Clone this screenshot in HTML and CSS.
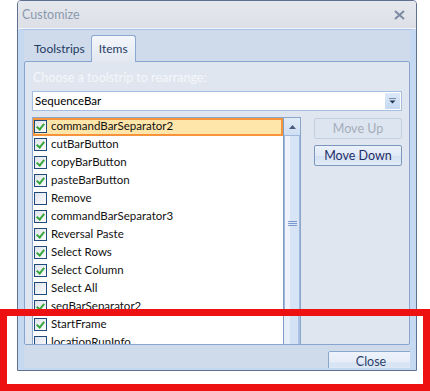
FILE: index.html
```html
<!DOCTYPE html>
<html>
<head>
<meta charset="utf-8">
<link rel="stylesheet" href="styles.css">
</head>
<body>
<div class="window">
  <div class="titlebar">
    <span class="title">Customize</span>
    <svg class="close-x" width="11" height="10" viewBox="0 0 11 10"><path d="M1 1 L10 9 M10 1 L1 9" stroke="#7d8ba2" stroke-width="2" fill="none"/></svg>
  </div>
  <div class="body">
    <div class="tabs">
      <div class="tab">Toolstrips</div>
      <div class="tab selected">Items</div>
    </div>
    <div class="panel">
      <div class="label">Choose a toolstrip to rearrange:</div>
      <div class="combo">
        <span class="combo-text">SequenceBar</span>
        <span class="combo-btn"><svg width="7" height="6" viewBox="0 0 7 6"><path d="M0 0 H7" stroke="#1f3556" stroke-width="1.2"/><path d="M0.5 2.5 H6.5 L3.5 5.5 Z" fill="#1f3556"/></svg></span>
      </div>
      <div class="main">
        <div class="listbox">
          <div class="items">
            <div class="item sel"><span class="cb on"></span>commandBarSeparator2</div>
            <div class="item"><span class="cb on"></span>cutBarButton</div>
            <div class="item"><span class="cb on"></span>copyBarButton</div>
            <div class="item"><span class="cb on"></span>pasteBarButton</div>
            <div class="item"><span class="cb"></span>Remove</div>
            <div class="item"><span class="cb on"></span>commandBarSeparator3</div>
            <div class="item"><span class="cb on"></span>Reversal Paste</div>
            <div class="item"><span class="cb on"></span>Select Rows</div>
            <div class="item"><span class="cb on"></span>Select Column</div>
            <div class="item"><span class="cb"></span>Select All</div>
            <div class="item"><span class="cb on"></span>seqBarSeparator2</div>
            <div class="item"><span class="cb on"></span>StartFrame</div>
            <div class="item"><span class="cb"></span>locationRunInfo</div>
          </div>
          <div class="scrollbar">
            <div class="sb-up"><svg width="7" height="4" viewBox="0 0 7 4"><path d="M3.5 0 L7 4 H0 Z" fill="#4b5d7c"/></svg></div>
            <div class="sb-thumb"><span class="grip"></span><span class="grip"></span><span class="grip"></span></div>
          </div>
        </div>
        <div class="buttons">
          <div class="btn disabled">Move Up</div>
          <div class="btn">Move Down</div>
        </div>
      </div>
    </div>
    <div class="footer">
      <div class="btn close">Close</div>
    </div>
  </div>
</div>
<div class="highlight-box"></div>
</body>
</html>
```
FILE: styles.css
```css
html, body {
  margin: 0;
  padding: 0;
  background: #ffffff;
}
body {
  font-family: Lato, "Liberation Sans", sans-serif;
  font-size: 12px;
  width: 430px;
  height: 391px;
  overflow: hidden;
  position: relative;
}
.window {
  margin-left: 17px;
  width: 398px;
  height: 369px;
  border: 1px solid #5f7090;
  border-radius: 4px 4px 0 0;
  display: flex;
  flex-direction: column;
  overflow: hidden;
}
.titlebar {
  height: 27px;
  flex: none;
  background: linear-gradient(#e5e8ed, #dcdfe5);
  border-bottom: 1px solid #f2f4f7;
  display: flex;
  align-items: center;
  justify-content: space-between;
  padding: 0 11px 0 4px;
}
.title {
  color: #8b99ae;
  font-size: 12.5px;
}
.close-x { display: block; }
.body {
  flex: 1;
  background: #cfdbeb;
  border-left: 6px solid #c5d9f2;
  border-right: 6px solid #c5d9f2;
  border-top: 1px solid #a9c3e6;
  border-bottom: 2px solid #c5d9f2;
  display: flex;
  flex-direction: column;
  overflow: hidden;
}
.tabs {
  display: flex;
  align-items: flex-end;
  padding: 4px 0 0 3px;
  height: 27px;
  flex: none;
}
.tab {
  height: 26px;
  line-height: 26px;
  padding: 0 6px 0 7px;
  color: #1e3a62;
  font-size: 12px;
  position: relative;
  top: 1px;
  box-sizing: border-box;
}
.tab.selected {
  border: 1px solid #8aa8d2;
  border-bottom: none;
  border-radius: 3px 3px 0 0;
  background: linear-gradient(#f4f7fb, #e2e8f1);
  padding: 0 7px;
  line-height: 25px;
  height: 27px;
  z-index: 1;
}
.panel {
  height: 282px;
  flex: none;
  border: 1px solid #87a5cf;
  border-radius: 2px;
  background: #e0e6ef;
  padding: 0 7px 0 7px;
  display: flex;
  flex-direction: column;
  overflow: hidden;
}
.label {
  color: #f4f7fb;
  font-size: 12.5px;
  height: 29px;
  line-height: 31px;
  padding-left: 1px;
  flex: none;
}
.combo {
  height: 18px;
  border: 1px solid #a5bfe0;
  background: #ffffff;
  display: flex;
  align-items: center;
  justify-content: space-between;
  flex: none;
}
.combo-text {
  color: #000;
  padding-left: 2px;
  font-size: 11.5px;
  padding-bottom: 1px;
}
.combo-btn {
  width: 15px;
  height: 16px;
  margin-right: 1px;
  background: linear-gradient(#dde9f8, #c5d8f1);
  display: flex;
  align-items: center;
  justify-content: center;
}
.combo-btn svg { display: block; }
.main {
  display: flex;
  gap: 13px;
  margin-top: 6px;
  flex: 1;
  min-height: 0;
}
.listbox {
  width: 267px;
  height: 240px;
  flex: none;
  border: 1px solid #8aa6cc;
  border-bottom: none;
  background: #fff;
  display: flex;
  overflow: hidden;
}
.items {
  flex: 1;
}
.item {
  height: 18px;
  display: flex;
  align-items: center;
  padding-left: 1px;
  color: #111;
  font-size: 11.5px;
  white-space: nowrap;
}
.item-text { display: block; }
.item.sel {
  background: #fee5a9;
  box-shadow: inset 0 0 0 2px #f6933b;
}
.cb {
  width: 11px;
  height: 11px;
  border: 1px solid #1f4a7a;
  background: linear-gradient(135deg, #dfe3ea, #fbfcfd);
  margin-right: 4px;
  margin-top: 1px;
  position: relative;
  flex: none;
  align-self: flex-start;
  margin-top: 2px;
}
.item {
  line-height: 16px;
  align-items: flex-start;
}
.cb.on::after {
  content: "";
  position: absolute;
  left: 3px;
  top: 1px;
  width: 3px;
  height: 6px;
  border-right: 2px solid #36a63a;
  border-bottom: 2px solid #36a63a;
  transform: rotate(40deg);
}
.scrollbar {
  width: 16px;
  flex: none;
  border-left: 1px solid #7f9cc5;
  background: linear-gradient(90deg, #e6eefa 0, #e6eefa 6px, #d3e2f5 6px, #d3e2f5 14px, #a9c0e0 14px);
  display: flex;
  flex-direction: column;
}
.sb-up {
  height: 17px;
  background: linear-gradient(#e2ebf7, #cfdff3);
  border-bottom: 1px solid #9fb7d8;
  display: flex;
  align-items: center;
  justify-content: center;
  flex: none;
}
.sb-up svg { display: block; }
.sb-thumb {
  height: 176px;
  border: 1px solid #9fb7d8;
  border-top: none;
  background: linear-gradient(90deg, #eef3fb 0, #eef3fb 5px, #d6e4f6 5px);
  display: flex;
  flex-direction: column;
  align-items: center;
  justify-content: center;
  gap: 1px;
  box-sizing: border-box;
}
.grip {
  width: 9px;
  height: 1px;
  background: #7b9acb;
  margin-left: 1px;
}
.buttons {
  display: flex;
  flex-direction: column;
  gap: 6px;
  padding-top: 1px;
}
.btn {
  width: 86px;
  height: 19px;
  border: 1px solid #7b97bd;
  border-radius: 2px;
  background: linear-gradient(#eaf1fb 0, #e1eaf7 50%, #d3e0f1 51%, #e3ecf8 100%);
  color: #1f2d6a;
  font-size: 12.5px;
  display: flex;
  align-items: center;
  justify-content: center;
}
.btn.disabled {
  border-color: #c3cfe0;
  background: #dde5f0;
  color: #a5adbb;
}
.footer {
  display: flex;
  justify-content: flex-end;
  padding-top: 6px;
  margin-right: -4px;
}
.btn.close {
  width: 86px;
  height: 24px;
  color: #2b3f6a;
  border-color: #8ca7cc;
  background: linear-gradient(#eef3fb 0, #e6edf8 45%, #d6e3f3 50%, #e4ecf8 100%);
  align-items: flex-start;
  padding-top: 3px;
  line-height: 14px;
  box-sizing: border-box;
}
.highlight-box {
  position: absolute;
  left: 0;
  top: 309px;
  width: 416px;
  height: 68px;
  border: 7px solid #ee1111;
}
```
